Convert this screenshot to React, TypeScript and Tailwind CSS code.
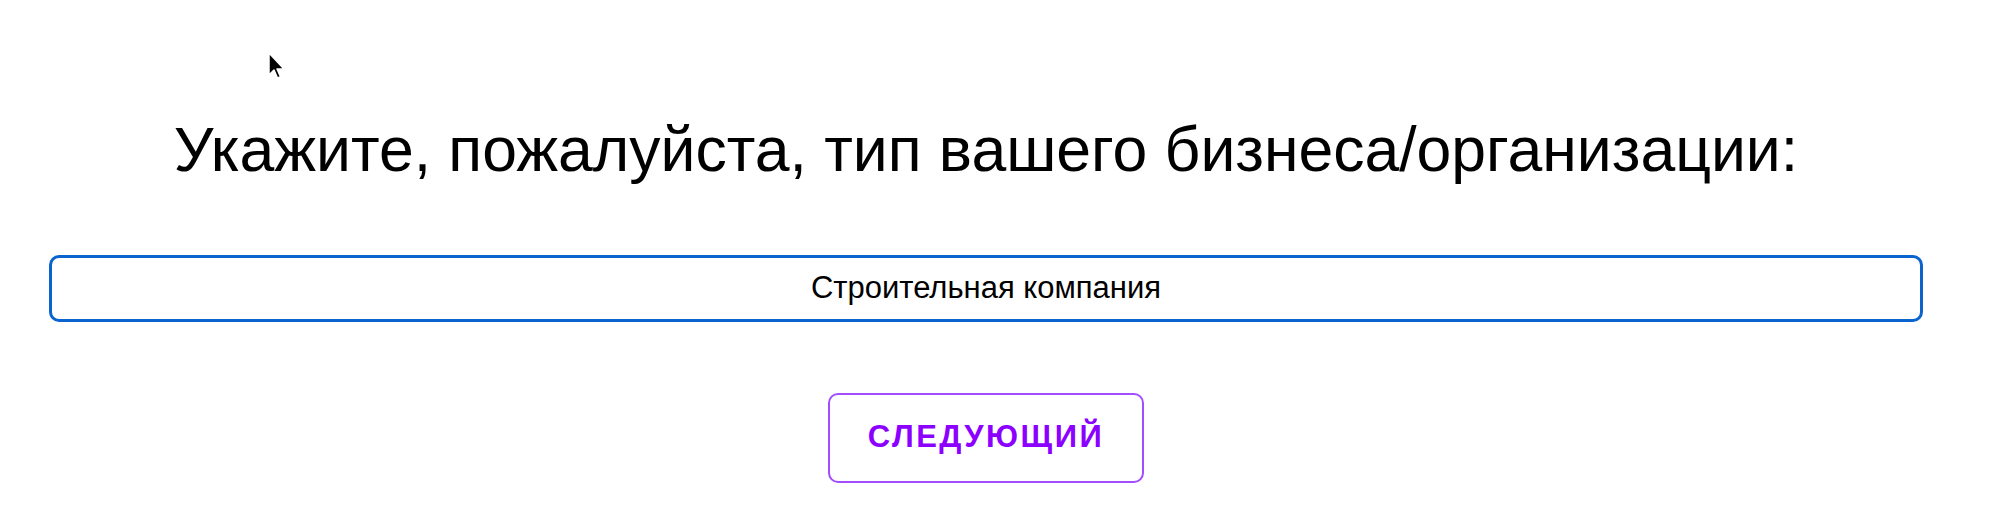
import { useState } from "react";

function Cursor() {
  return (
    <svg
      className="absolute left-[266px] top-[51px]"
      width="20"
      height="30"
      viewBox="0 0 20 30"
      fill="none"
    >
      <path
        d="M3 2 L3 24 L8 19 L11.5 27 L14.5 25.8 L11 18 L18 18 Z"
        fill="#000"
        stroke="#fff"
        strokeWidth="1.5"
        strokeLinejoin="round"
      />
    </svg>
  );
}

export default function App() {
  const [value, setValue] = useState("Строительная компания");

  return (
    <div
      className="relative min-h-[507px] w-full bg-white pl-[49px] pr-[76px]"
      style={{ fontFamily: "'Liberation Sans', Arial, sans-serif" }}
    >
      <Cursor />

      <div className="flex flex-col items-center pt-[118px]">
        <h1 className="text-[62.5px] leading-none font-normal text-black whitespace-nowrap">
          Укажите, пожалуйста, тип вашего бизнеса/организации:
        </h1>

        <input
          value={value}
          onChange={(e) => setValue(e.target.value)}
          className="mt-[74px] h-[67px] w-full rounded-[10px] border-[3px] border-[#0b63ce] bg-white text-center text-[31px] text-black outline-none"
        />

        <button className="mt-[71px] h-[90px] w-[316px] rounded-[10px] border-2 border-[#a24dff] bg-white text-[31px] font-bold tracking-[2.5px] text-[#8c00ff]">
          СЛЕДУЮЩИЙ
        </button>
      </div>
    </div>
  );
}
